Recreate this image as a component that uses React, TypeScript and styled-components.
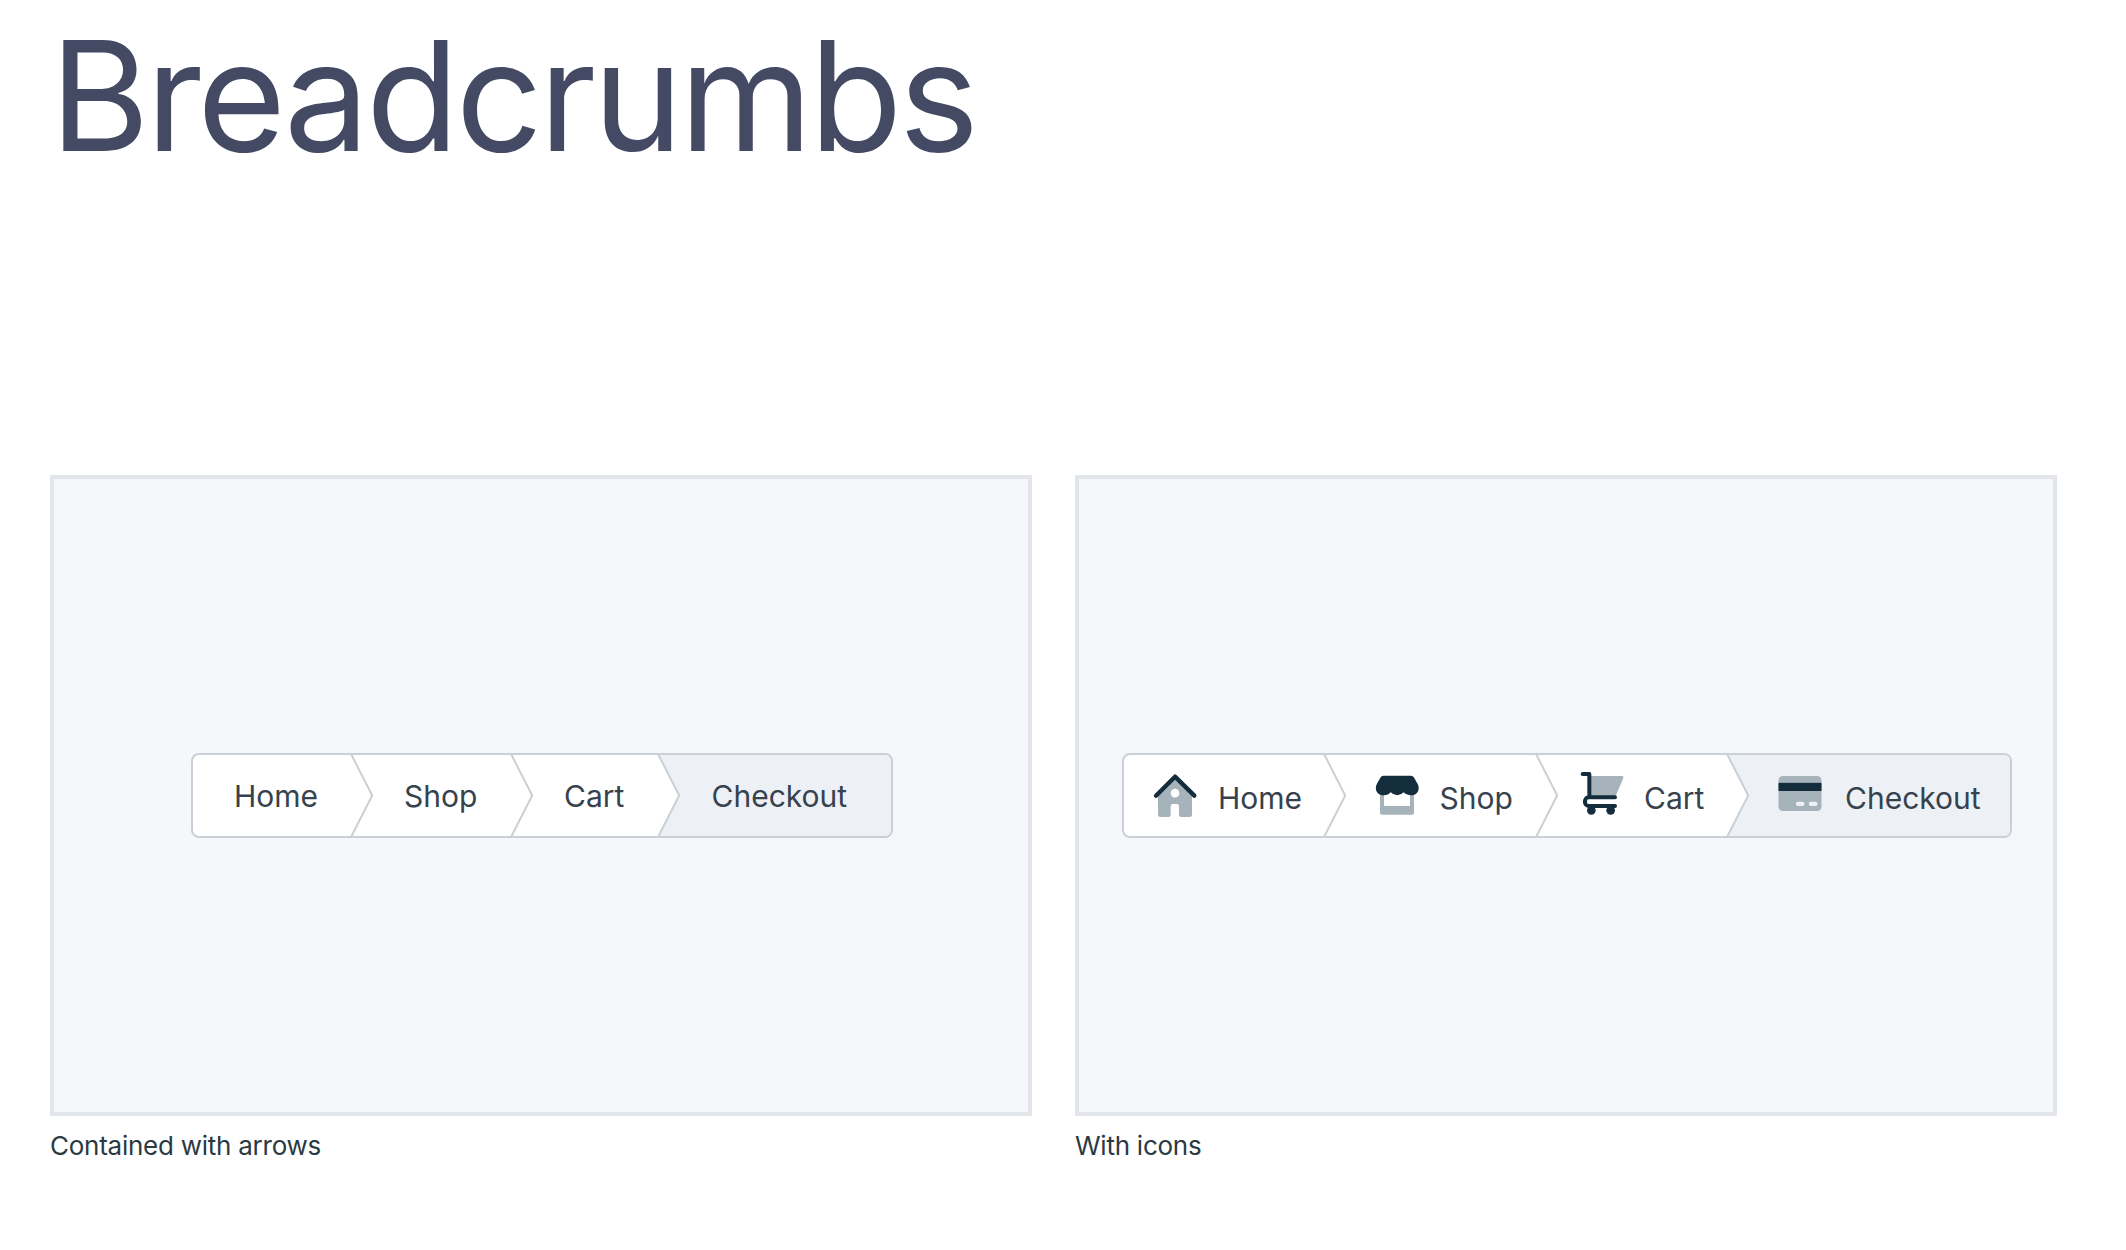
import React from "react";
import styled, { createGlobalStyle, css } from "styled-components";

const ink = "#142d3d";
const soft = "#a6b3ba";
const line = "#cad0d7";

const GlobalStyle = createGlobalStyle`
  * { box-sizing: border-box; }
  body { margin: 0; background: #fff; font-family: Inter, "Liberation Sans", sans-serif; }
`;

const Page = styled.main`
  width: 2126px;
  height: 1250px;
  padding: 0 50px;
  overflow: hidden;
`;

const Title = styled.h1`
  margin: 0;
  height: 475px;
  padding-top: 4px;
  font-size: 152px;
  line-height: 184px;
  font-weight: 400;
  letter-spacing: -3.4px;
  color: #454a64;
`;

const Gallery = styled.section`
  display: flex;
  gap: 43px;
`;

const Figure = styled.figure`
  margin: 0;
  width: 982px;
`;

const Panel = styled.div`
  height: 641px;
  display: flex;
  align-items: center;
  justify-content: center;
  padding-left: 2px;
  border: 4px solid #e2e6ea;
  background: #f5f7fb;
`;

const Caption = styled.figcaption`
  margin-top: 14px;
  font-size: 26px;
  line-height: 32px;
  letter-spacing: -0.25px;
  color: #2b3a42;
`;

const Trail = styled.ol<{ $width: number }>`
  display: flex;
  width: ${(p) => p.$width}px;
  height: 85px;
  margin: 0;
  padding: 0;
  list-style: none;
  border: 2px solid ${line};
  border-radius: 8px;
  background: #fff;
`;

const Crumb = styled.li<{ $width: number; $inset: number; $gap: number; $current?: boolean }>`
  position: relative;
  display: flex;
  align-items: center;
  gap: ${(p) => p.$gap}px;
  flex: 0 0 ${(p) => p.$width}px;
  padding-left: ${(p) => p.$inset}px;
  ${(p) =>
    p.$current
      ? css`
          background: #edf0f5;
          border-radius: 0 6px 6px 0;
        `
      : css`
          z-index: 1;
        `}
`;

const Label = styled.span<{ $drop: number }>`
  padding-top: ${(p) => p.$drop}px;
  font-size: 30px;
  line-height: 36px;
  white-space: nowrap;
  color: #36424d;
`;

const ArrowShape = styled.svg`
  position: absolute;
  left: 100%;
  top: 0;
  width: 23px;
  height: 81px;
  overflow: visible;
`;

const IconShape = styled.svg`
  flex: none;
  width: 44px;
  height: 44px;
  overflow: visible;
`;

const Arrow = () => (
  <ArrowShape viewBox="0 0 23 81">
    <path d="M-0.7 0L20.2 40.5L-0.7 81Z" fill="#fff" />
    <path d="M-0.7 -0.5L20.2 40.5L-0.7 81.5" fill="none" stroke={line} strokeWidth="2" />
  </ArrowShape>
);

const HomeIcon = () => (
  <IconShape viewBox="129 102 132 132">
    <path
      fillRule="evenodd"
      fill={soft}
      d="M195 117L246 164V224Q246 231 239 231H214Q207 231 207 224V199Q207 192 200 192H189Q182 192 182 199V224Q182 231 175 231H151Q144 231 144 224V164ZM195 146.500a13 13 0 1 0 0 26a13 13 0 1 0 0-26Z"
    />
    <path d="M138 167L195 110L253 167" fill="none" stroke={ink} strokeWidth="13" strokeLinecap="round" strokeLinejoin="round" />
  </IconShape>
);

const ShopIcon = () => (
  <IconShape viewBox="75 102 132 132">
    <path fillRule="evenodd" fill={soft} d="M90 150H192V218Q192 224 186 224H96Q90 224 90 218ZM102 150V198H180V150Z" />
    <path
      fill={ink}
      d="M100 107.500H183Q189 107.500 191.500 112L203 132Q206 137 206 144C206 157 197 166 184 166Q168 165 161 157Q153 165.500 142 165.500Q130 165.500 122 157Q115 165.500 101 166C87 166 77.500 157 77.500 144Q77.500 137 80.500 132L92 112Q94.500 107.500 100 107.500Z"
    />
  </IconShape>
);

const CartIcon = () => (
  <IconShape viewBox="60 102 132 132">
    <path fill={soft} d="M88 108H186Q192 108 190 114L166 170H88Z" />
    <path
      d="M68 102H88V172M165 172H86C71 172 71 198 86 198H165"
      fill="none"
      stroke={ink}
      strokeWidth="12"
      strokeLinecap="round"
      strokeLinejoin="round"
    />
    <circle cx="94" cy="211" r="13" fill={ink} />
    <circle cx="152" cy="211" r="13" fill={ink} />
  </IconShape>
);

const CardIcon = () => (
  <IconShape viewBox="55.5 102 132 132">
    <rect x="57" y="108" width="129" height="105" rx="13" fill={soft} />
    <rect x="57" y="128.500" width="129" height="24.500" fill={ink} />
    <rect x="109" y="185" width="26" height="13" rx="6.5" fill="#edf0f5" />
    <rect x="148" y="185" width="26" height="13" rx="6.5" fill="#edf0f5" />
  </IconShape>
);

type Step = {
  label: string;
  width: number;
  inset: number;
  gap?: number;
  icon?: React.ReactNode;
};

const plain: Step[] = [
  { label: "Home", width: 159, inset: 41 },
  { label: "Shop", width: 160, inset: 52 },
  { label: "Cart", width: 146.5, inset: 52 },
  { label: "Checkout", width: 232.5, inset: 53 },
];

const withIcons: Step[] = [
  { label: "Home", width: 201, inset: 29, gap: 21, icon: <HomeIcon /> },
  { label: "Shop", width: 211.7, inset: 50, gap: 20.5, icon: <ShopIcon /> },
  { label: "Cart", width: 191.3, inset: 43.3, gap: 20, icon: <CartIcon /> },
  { label: "Checkout", width: 282, inset: 50.5, gap: 22.5, icon: <CardIcon /> },
];

const Breadcrumbs = ({ steps, width }: { steps: Step[]; width: number }) => (
  <Trail $width={width}>
    {steps.map((s, i) => {
      const current = i === steps.length - 1;
      return (
        <Crumb key={s.label} $width={s.width} $inset={s.inset} $gap={s.gap ?? 0} $current={current}>
          {s.icon}
          <Label $drop={s.icon ? 4 : 0}>{s.label}</Label>
          {!current && <Arrow />}
        </Crumb>
      );
    })}
  </Trail>
);

export default function App() {
  return (
    <>
      <GlobalStyle />
      <Page>
        <Title>Breadcrumbs</Title>
        <Gallery>
          <Figure>
            <Panel>
              <Breadcrumbs steps={plain} width={702} />
            </Panel>
            <Caption>Contained with arrows</Caption>
          </Figure>
          <Figure>
            <Panel>
              <Breadcrumbs steps={withIcons} width={890} />
            </Panel>
            <Caption>With icons</Caption>
          </Figure>
        </Gallery>
      </Page>
    </>
  );
}
